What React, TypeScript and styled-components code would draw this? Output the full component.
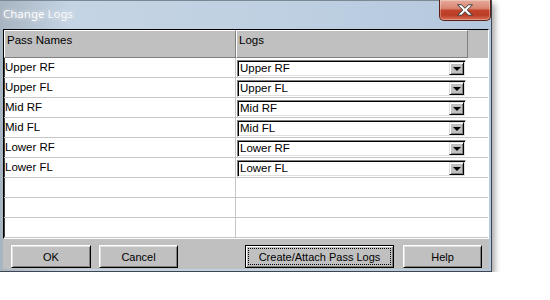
import React from 'react';
import styled, { createGlobalStyle } from 'styled-components';

const GlobalStyle = createGlobalStyle`
  html, body {
    margin: 0;
    padding: 0;
    background: #ffffff;
  }
  body {
    font-family: "Liberation Sans", Arial, sans-serif;
    font-size: 11px;
    color: #000;
  }
`;

const passNames = ['Upper RF', 'Upper FL', 'Mid RF', 'Mid FL', 'Lower RF', 'Lower FL'];
const EMPTY_ROWS = 3;

const Window = styled.div`
  width: 492px;
  height: 272px;
  box-sizing: border-box;
  display: flex;
  flex-direction: column;
  padding: 0 2px 2px 3px;
  background: linear-gradient(90deg, #a7b4c1 0%, #c4d4e4 14%, #bfd0e2 55%, #b4c8dd 100%);
  border-top: 1px solid #7d8895;
  border-right: 1px solid #3e454d;
  border-bottom: 1px solid #3e454d;
  box-shadow: 3px 4px 6px rgba(0, 0, 0, 0.35);
`;

const TitleBar = styled.div`
  height: 28px;
  display: flex;
  justify-content: space-between;
  align-items: flex-start;
  margin-right: -2px;
`;

const Title = styled.span`
  font-family: "Noto Sans", "Liberation Sans", sans-serif;
  font-size: 11.5px;
  line-height: 16px;
  padding-top: 5px;
  color: #ffffff;
  text-shadow: 0 0 4px rgba(255, 255, 255, 0.9), 0 0 1px rgba(120, 140, 160, 0.6);
`;

const CloseButton = styled.div`
  width: 50px;
  height: 20px;
  margin-top: -1px;
  display: flex;
  align-items: center;
  justify-content: center;
  border: 1px solid #5b1f15;
  border-top: none;
  border-radius: 0 0 5px 5px;
  background: linear-gradient(180deg, #e6ab9c 0%, #d98570 42%, #c2442c 52%, #bb3c24 75%, #d87056 100%);
  box-shadow: inset 0 0 0 1px rgba(255, 255, 255, 0.3);
`;

const Client = styled.div`
  flex: 1;
  display: flex;
  flex-direction: column;
  background: #c0c0c0;
`;

const Grid = styled.div`
  display: flex;
  flex-direction: column;
  background: #ffffff;
  border: 1px solid;
  border-color: #000000 #ffffff #ffffff #000000;
  box-shadow: inset 1px 0 0 #404040;
`;

const HeaderRow = styled.div`
  display: grid;
  grid-template-columns: 232px 232px 1fr;
  height: 28px;
  background: #c0c0c0;
`;

const HeaderCell = styled.div`
  box-sizing: border-box;
  padding: 2px 2px 0;
  line-height: 14px;
  font-size: 11.5px;
  border-top: 1px solid #ffffff;
  border-left: 1px solid #ffffff;
  border-right: 1px solid #808080;
  border-bottom: 1px solid #808080;
`;

const HeaderFiller = styled.div`
  border-bottom: 1px solid #c0c0c0;
`;

const Row = styled.div`
  display: grid;
  grid-template-columns: 232px 232px 1fr;
  height: 20px;
  box-sizing: border-box;
  border-bottom: 1px solid #c6c6c6;
`;

const NameCell = styled.div`
  box-sizing: border-box;
  padding: 2px 1px 0;
  line-height: 14px;
  font-size: 11.5px;
  border-right: 1px solid #c6c6c6;
`;

const LogCell = styled.div`
  padding: 2px 0 0 1px;
`;

const Combo = styled.div`
  width: 229px;
  height: 17px;
  box-sizing: border-box;
  display: flex;
  align-items: stretch;
  background: #ffffff;
  border: 1px solid;
  border-color: #808080 #ffffff #ffffff #808080;
  box-shadow: inset 1px 1px 0 #000000, inset -1px -1px 0 #dfdfdf;
  padding: 1px;
`;

const ComboText = styled.span`
  flex: 1;
  padding-left: 1px;
  line-height: 13px;
  font-size: 11.5px;
`;

const DropButton = styled.div`
  width: 15px;
  box-sizing: border-box;
  display: flex;
  align-items: center;
  justify-content: center;
  background: #c0c0c0;
  border: 1px solid;
  border-color: #dfdfdf #000000 #000000 #dfdfdf;
  box-shadow: inset 1px 1px 0 #ffffff, inset -1px -1px 0 #808080;
`;

const Arrow = styled.span`
  width: 0;
  height: 0;
  border-left: 4px solid transparent;
  border-right: 4px solid transparent;
  border-top: 4px solid #000000;
  margin-top: 1px;
`;

const ButtonBar = styled.div`
  display: flex;
  align-items: flex-start;
  gap: 8px;
  padding: 6px 7px 0 8px;
  flex: 1;
`;

const Button = styled.div<{ $width: number; $spaced?: boolean; $default?: boolean }>`
  width: ${p => p.$width}px;
  height: 23px;
  box-sizing: border-box;
  display: flex;
  align-items: stretch;
  justify-content: stretch;
  margin-left: ${p => (p.$spaced ? 'auto' : '0')};
  margin-right: ${p => (p.$default ? '1px' : '0')};
  background: #c0c0c0;
  border: 1px solid;
  border-color: ${p => (p.$default ? '#000000' : '#ffffff #000000 #000000 #ffffff')};
  box-shadow: ${p =>
    p.$default
      ? 'inset 1px 1px 0 #ffffff, inset -1px -1px 0 #808080'
      : 'inset 1px 1px 0 #dfdfdf, inset -1px -1px 0 #808080'};
`;

const ButtonLabel = styled.span<{ $focused?: boolean }>`
  flex: 1;
  display: flex;
  align-items: center;
  justify-content: center;
  margin: ${p => (p.$focused ? '2px' : '0')};
  border: ${p => (p.$focused ? '1px dotted #000000' : 'none')};
  font-size: 11px;
  color: #000000;
`;

const CloseGlyph = () => (
  <svg width="18" height="12" viewBox="0 0 18 12">
    <path
      d="M1.5 0.8 H5.6 L9 4.3 L12.4 0.8 H16.5 L11.2 6 L16.5 11.2 H12.4 L9 7.7 L5.6 11.2 H1.5 L6.8 6 Z"
      fill="#ffffff"
      stroke="#3a3a3a"
      strokeWidth="1"
      strokeLinejoin="round"
    />
  </svg>
);

const App = () => (
  <>
    <GlobalStyle />
    <Window>
      <TitleBar>
        <Title>Change Logs</Title>
        <CloseButton>
          <CloseGlyph />
        </CloseButton>
      </TitleBar>
      <Client>
        <Grid>
          <HeaderRow>
            <HeaderCell>Pass Names</HeaderCell>
            <HeaderCell>Logs</HeaderCell>
            <HeaderFiller />
          </HeaderRow>
          {passNames.map(name => (
            <Row key={name}>
              <NameCell>{name}</NameCell>
              <LogCell>
                <Combo>
                  <ComboText>{name}</ComboText>
                  <DropButton>
                    <Arrow />
                  </DropButton>
                </Combo>
              </LogCell>
              <div />
            </Row>
          ))}
          {Array.from({ length: EMPTY_ROWS }).map((_, i) => (
            <Row key={`empty-${i}`}>
              <NameCell />
              <div />
              <div />
            </Row>
          ))}
        </Grid>
        <ButtonBar>
          <Button $width={80}>
            <ButtonLabel>OK</ButtonLabel>
          </Button>
          <Button $width={79}>
            <ButtonLabel>Cancel</ButtonLabel>
          </Button>
          <Button $width={149} $spaced $default>
            <ButtonLabel $focused>Create/Attach Pass Logs</ButtonLabel>
          </Button>
          <Button $width={79}>
            <ButtonLabel>Help</ButtonLabel>
          </Button>
        </ButtonBar>
      </Client>
    </Window>
  </>
);

export default App;
